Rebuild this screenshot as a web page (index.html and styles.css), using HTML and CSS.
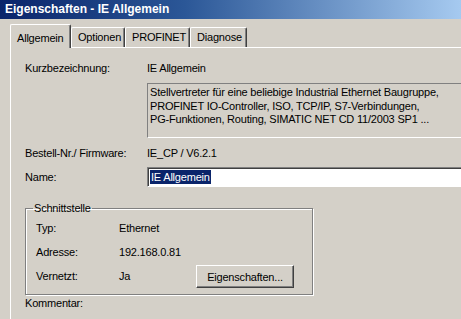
FILE: index.html
```html
<!DOCTYPE html>
<html>
<head>
<meta charset="utf-8">
<title>Eigenschaften - IE Allgemein</title>
<link rel="stylesheet" href="styles.css">
</head>
<body>
<div class="win">
    <div class="titlebar">Eigenschaften - IE Allgemein</div>
    <div class="dialog">
        <ul class="tabs">
            <li class="current">Allgemein</li>
            <li>Optionen</li>
            <li>PROFINET</li>
            <li>Diagnose</li>
        </ul>
        <div class="panel">
            <div class="row r-kurz">
                <span class="lbl">Kurzbezeichnung:</span>
                <span class="val">IE Allgemein</span>
            </div>
            <div class="row r-desc">
                <span class="lbl"></span>
                <div class="desc">Stellvertreter für eine beliebige Industrial Ethernet Baugruppe,<br>PROFINET IO-Controller, ISO, TCP/IP, S7-Verbindungen,<br>PG-Funktionen, Routing, SIMATIC NET CD 11/2003 SP1 ...</div>
            </div>
            <div class="row r-best">
                <span class="lbl">Bestell-Nr./ Firmware:</span>
                <span class="val">IE_CP / V6.2.1</span>
            </div>
            <div class="row r-name">
                <span class="lbl">Name:</span>
                <div class="edit"><span class="sel">IE Allgemein</span></div>
            </div>
            <fieldset class="group">
                <legend>Schnittstelle</legend>
                <div class="grow">
                    <span class="glbl">Typ:</span>
                    <span>Ethernet</span>
                </div>
                <div class="grow">
                    <span class="glbl">Adresse:</span>
                    <span>192.168.0.81</span>
                </div>
                <div class="grow g-last">
                    <span class="glbl">Vernetzt:</span>
                    <span class="ja">Ja</span>
                    <button class="btn">Eigenschaften...</button>
                </div>
            </fieldset>
            <div class="row r-komm">
                <span class="lbl">Kommentar:</span>
            </div>
        </div>
    </div>
</div>
</body>
</html>
```

FILE: styles.css
```css
body,div,ul,li,fieldset,legend{margin:0;padding:0;}
ul{list-style-type:none;}
body{background:#d4d0c8;font:11px/13px "Liberation Sans",Arial,sans-serif;color:#000;overflow:hidden;letter-spacing:-0.2px;}
.win{width:461px;height:319px;overflow:hidden;}
.titlebar{height:19px;line-height:19px;padding-left:5px;color:#fff;font-weight:700;font-size:12px;letter-spacing:0;background:linear-gradient(to right,#0a246a 0%,#2b5797 40%,#a6caf0 100%);}
.dialog{padding:5px 0 0 10px;}

/* Reiter */
.tabs{display:flex;align-items:flex-end;height:23px;}
.tabs li{height:19px;line-height:19px;padding:0 6px;border-top:1px solid #fff;border-left:1px solid #fff;border-right:1px solid #404040;box-shadow:inset -1px 0 0 #808080;border-radius:2px 2px 0 0;}
.tabs li.current{height:23px;line-height:27px;padding:0 6px 0 6px;width:47px;position:relative;top:1px;background:#d4d0c8;z-index:1;}
.tabs li:nth-child(2){width:40px;}
.tabs li:nth-child(3){width:51px;}
.tabs li:nth-child(4){width:43px;}

.panel{border-top:1px solid #fff;border-left:1px solid #fff;padding:14px 0 0 14px;height:260px;}
.row{display:flex;align-items:center;}
.lbl{width:122px;flex:none;}
.r-desc{margin-top:8px;}
.desc{flex:1;height:51px;padding:2px 0 0 2px;line-height:13.5px;border-top:1px solid #808080;border-left:1px solid #808080;border-bottom:1px solid #fff;border-right:none;}
.r-best{margin-top:9px;}
.r-name{margin-top:7px;}
.edit{flex:1;height:18px;line-height:18px;background:#fff;padding-left:2px;border-top:1px solid #808080;border-left:1px solid #808080;border-bottom:1px solid #fff;box-shadow:inset 1px 1px 0 #404040;}
.sel{background:#0a246a;color:#fff;padding:1px 1px;}

/* Gruppe */
.group{width:276px;height:88px;margin-top:15px;border:1px solid #808080;box-shadow:1px 1px 0 #fff,inset 1px 1px 0 #fff;padding:3px 0 0 10px;box-sizing:content-box;}
.group legend{padding:0 1px;margin-left:-3px;line-height:13px;}
.grow{display:flex;align-items:center;height:13px;margin-top:4px;}
.grow + .grow{margin-top:11px;}
.glbl{width:83px;flex:none;}
.ja{width:77px;flex:none;}
.g-last{margin-top:11px;}
.btn{width:98px;height:23px;margin-left:0;font:11px "Liberation Sans",Arial,sans-serif;letter-spacing:-0.2px;color:#000;background:#d4d0c8;border:1px solid;border-color:#fff #404040 #404040 #fff;box-shadow:inset -1px -1px 0 #808080;padding:0;}
.r-komm{margin-top:2px;height:13px;}
```
